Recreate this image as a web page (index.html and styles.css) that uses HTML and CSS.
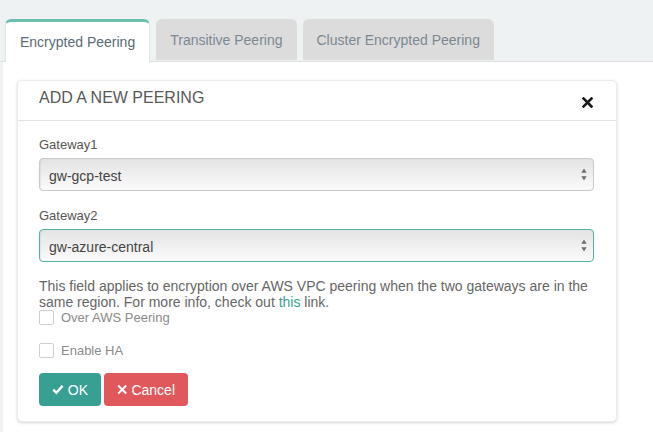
FILE: index.html
```html
<!DOCTYPE html>
<html>
<head>
<meta charset="utf-8">
<link rel="stylesheet" href="styles.css">
</head>
<body>
<div class="tabs">
  <div class="tab active">Encrypted Peering</div>
  <div class="tab">Transitive Peering</div>
  <div class="tab">Cluster Encrypted Peering</div>
</div>
<div class="pane">
  <div class="card">
    <div class="card-header">
      <span class="title">ADD A NEW PEERING</span>
      <svg class="close" width="11" height="11" viewBox="0 0 11 11"><path d="M1.5 1.5 L9.5 9.5 M9.5 1.5 L1.5 9.5" stroke="#1a1a1a" stroke-width="2.6" stroke-linecap="square"/></svg>
    </div>
    <div class="card-body">
      <div class="label">Gateway1</div>
      <div class="select">
        <span>gw-gcp-test</span>
        <svg class="arrows" width="6" height="13" viewBox="0 0 6 13"><path d="M3 0.5 L5.7 4.8 L0.3 4.8 Z M3 12.5 L5.7 8.2 L0.3 8.2 Z" fill="#6e6e6e"/></svg>
      </div>
      <div class="label second">Gateway2</div>
      <div class="select focused">
        <span>gw-azure-central</span>
        <svg class="arrows" width="6" height="13" viewBox="0 0 6 13"><path d="M3 0.5 L5.7 4.8 L0.3 4.8 Z M3 12.5 L5.7 8.2 L0.3 8.2 Z" fill="#6e6e6e"/></svg>
      </div>
      <p class="help">This field applies to encryption over AWS VPC peering when the two gateways are in the same region. For more info, check out <a href="#">this</a> link.</p>
      <label class="check"><span class="box"></span>Over AWS Peering</label>
      <label class="check ha"><span class="box"></span>Enable HA</label>
      <div class="buttons">
        <button class="btn ok"><svg width="12" height="11" viewBox="0 0 12 11"><path d="M1.3 5.6 L4.5 8.8 L10.8 1.6" fill="none" stroke="#fff" stroke-width="2.4"/></svg>OK</button>
        <button class="btn cancel"><svg width="11" height="11" viewBox="0 0 11 11"><path d="M1.3 1.3 L9.7 9.7 M9.7 1.3 L1.3 9.7" stroke="#fff" stroke-width="2"/></svg>Cancel</button>
      </div>
    </div>
  </div>
</div>
</body>
</html>
```
FILE: styles.css
```css
html, body {
  margin: 0;
  padding: 0;
}
body {
  background: #eef2f3;
  font-family: "Liberation Sans", Arial, sans-serif;
  width: 653px;
  height: 432px;
  overflow: hidden;
}
.tabs {
  display: flex;
  align-items: flex-start;
  gap: 6px;
  padding: 19px 0 0 5px;
  border-bottom: 1px solid #dcdfe0;
}
.tab {
  box-sizing: border-box;
  height: 41px;
  margin-bottom: 1px;
  padding: 0 14px;
  display: flex;
  align-items: center;
  justify-content: center;
  white-space: nowrap;
  background: #dcdcdc;
  color: #7b8893;
  font-size: 14px;
  border-radius: 6px 6px 0 0;
}
.tab.active {
  height: 43px;
  margin-bottom: -1px;
  background: #fff;
  color: #5a6a78;
  border-top: 3px solid #6bbfae;
  border-left: 1px solid #e2e2e2;
  border-right: 1px solid #e2e2e2;
  padding: 0 14px;
  min-width: 145px;
}
.pane {
  background: #fff;
  margin-left: 3px;
  height: 370px;
  padding: 18px 0 0 14px;
  box-sizing: border-box;
}
.card {
  box-sizing: border-box;
  width: 600px;
  height: 342px;
  background: #fff;
  border: 1px solid #ececec;
  border-radius: 5px;
  box-shadow: 0 1px 3px rgba(0,0,0,0.16);
}
.card-header {
  height: 39px;
  border-bottom: 1px solid #e3e3e3;
  display: flex;
  align-items: center;
  justify-content: space-between;
  padding: 0 23px 0 21px;
}
.title {
  font-size: 16px;
  color: #585858;
  margin-top: -6px;
}
.close {
  margin-top: 3px;
}
.card-body {
  padding: 15px 22px 15px 21px;
}
.label {
  font-size: 13px;
  line-height: 18px;
  color: #555;
}
.label.second {
  margin-top: 16px;
}
.select {
  box-sizing: border-box;
  margin-top: 4px;
  height: 33px;
  width: 555px;
  border: 1px solid #c9c9c9;
  border-radius: 4px;
  background: linear-gradient(#e3e3e3, #fbfbfb);
  box-shadow: inset 1px 0 1px rgba(0,0,0,0.06);
  display: flex;
  align-items: center;
  justify-content: space-between;
  padding: 2px 6px 0 9px;
  font-size: 14px;
  color: #444;
}
.select.focused {
  border-color: #52b3a3;
}
.arrows {
  margin-top: -2px;
}
.help {
  margin: 16px 0 0 0;
  font-size: 14px;
  line-height: 16px;
  color: #666;
}
.help a {
  color: #3a9f8f;
  text-decoration: none;
}
.check {
  display: flex;
  align-items: center;
  gap: 7px;
  font-size: 13px;
  color: #8a8a8a;
  height: 16px;
  margin-top: -1px;
}
.check.ha {
  margin-top: 17px;
}
.box {
  box-sizing: border-box;
  width: 15px;
  height: 15px;
  border: 1px solid #cfcfcf;
  border-radius: 2px;
  background: #fff;
}
.buttons {
  display: flex;
  gap: 3px;
  margin-top: 15px;
}
.btn {
  height: 33px;
  border: none;
  border-radius: 4px;
  color: #fff;
  font-family: "Liberation Sans", Arial, sans-serif;
  font-size: 14px;
  display: flex;
  align-items: center;
  gap: 4px;
  padding: 0 13px;
}
.btn.ok {
  background: #37a092;
  width: 62px;
}
.btn.cancel {
  background: #e0585c;
  width: 84px;
}
```
